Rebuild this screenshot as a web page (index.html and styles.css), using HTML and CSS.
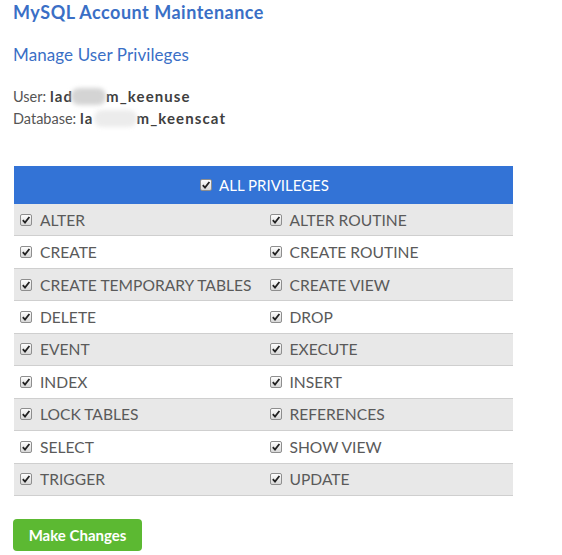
FILE: index.html
```html
<!DOCTYPE html>
<html>
<head>
<meta charset="utf-8">
<link rel="stylesheet" href="styles.css">
</head>
<body>
<div class="page">
  <h1 class="title">MySQL Account Maintenance</h1>
  <h2 class="subtitle">Manage User Privileges</h2>
  <div class="info">
    <div class="line">User: <b>lad<span class="blur b1"></span>m_keenuse</b></div>
    <div class="line">Database: <b>la<span class="blur b2"></span>m_keenscat</b></div>
  </div>
  <div class="table">
    <div class="head"><span class="cb"></span>ALL PRIVILEGES</div>
    <div class="row gray"><div class="cell"><span class="cb"></span>ALTER</div><div class="cell"><span class="cb"></span>ALTER ROUTINE</div></div>
    <div class="row"><div class="cell"><span class="cb"></span>CREATE</div><div class="cell"><span class="cb"></span>CREATE ROUTINE</div></div>
    <div class="row gray"><div class="cell"><span class="cb"></span>CREATE TEMPORARY TABLES</div><div class="cell"><span class="cb"></span>CREATE VIEW</div></div>
    <div class="row"><div class="cell"><span class="cb"></span>DELETE</div><div class="cell"><span class="cb"></span>DROP</div></div>
    <div class="row gray"><div class="cell"><span class="cb"></span>EVENT</div><div class="cell"><span class="cb"></span>EXECUTE</div></div>
    <div class="row"><div class="cell"><span class="cb"></span>INDEX</div><div class="cell"><span class="cb"></span>INSERT</div></div>
    <div class="row gray"><div class="cell"><span class="cb"></span>LOCK TABLES</div><div class="cell"><span class="cb"></span>REFERENCES</div></div>
    <div class="row"><div class="cell"><span class="cb"></span>SELECT</div><div class="cell"><span class="cb"></span>SHOW VIEW</div></div>
    <div class="row gray"><div class="cell"><span class="cb"></span>TRIGGER</div><div class="cell"><span class="cb"></span>UPDATE</div></div>
  </div>
  <button class="btn">Make Changes</button>
</div>
</body>
</html>
```
FILE: styles.css
```css
html, body {
  margin: 0;
  padding: 0;
  background: #fff;
}
.page {
  font-family: Lato, "Open Sans", sans-serif;
  padding: 2px 0 0 13px;
  width: 500px;
}
.title {
  margin: 0;
  font-size: 18px;
  letter-spacing: 0.5px;
  font-weight: bold;
  color: #3a6fc6;
  line-height: 20px;
}
.subtitle {
  margin: 22px 0 0 0;
  font-size: 17px;
  letter-spacing: 0.1px;
  font-weight: normal;
  color: #3a6fc6;
  line-height: 22px;
}
.info {
  margin-top: 19px;
  font-size: 14.5px;
  color: #555;
}
.line {
  height: 22px;
  line-height: 22px;
  overflow: visible;
}
.info b {
  color: #3f3f3f;
  font-size: 15px;
  letter-spacing: 1.1px;
}
.blur {
  display: inline-block;
  vertical-align: -3px;
  height: 17px;
  background: #d4d4d4;
  border-radius: 8px;
  filter: blur(2px);
}
.b1 { width: 35px; margin-left: -2px; }
.b2 { width: 43px; background: #ececec; }
.table {
  margin: 37px 0 0 1px;
  width: 499px;
}
.head {
  background: #3373d6;
  height: 38px;
  display: flex;
  align-items: center;
  justify-content: center;
  color: #fff;
  font-size: 15px;
  padding-left: 2px;
}
.head .cb {
  margin-right: 7px;
}
.row {
  display: flex;
  height: 31.45px;
  border-bottom: 1px solid #cfcfcf;
  align-items: center;
}
.row.gray {
  background: #e8e8e8;
}
.cell {
  display: flex;
  align-items: center;
  width: 250px;
  padding-left: 6px;
  box-sizing: border-box;
  font-size: 15.6px;
  color: #5a5a5a;
}
.cell .cb {
  margin-right: 8px;
}
.cb {
  display: inline-block;
  width: 12px;
  height: 12px;
  box-sizing: border-box;
  border: 1px solid #8e8e8e;
  border-radius: 2px;
  background-image: url("data:image/svg+xml;utf8,<svg xmlns='http://www.w3.org/2000/svg' width='10' height='10' viewBox='0 0 10 10'><path d='M1.8 5.2 L4 7.6 L8.4 2' fill='none' stroke='%23222' stroke-width='1.8'/></svg>"), linear-gradient(#fdfdfd, #d8d8d8);
  background-size: 10px 10px, 100% 100%;
  background-repeat: no-repeat;
  flex: none;
}
.btn {
  margin-top: 23px;
  width: 129px;
  height: 32px;
  border: none;
  border-radius: 4px;
  background: #5cb932;
  color: #fff;
  font-family: Lato, "Open Sans", sans-serif;
  font-size: 15px;
  font-weight: bold;
  padding: 0;
  cursor: pointer;
  display: block;
}
```
